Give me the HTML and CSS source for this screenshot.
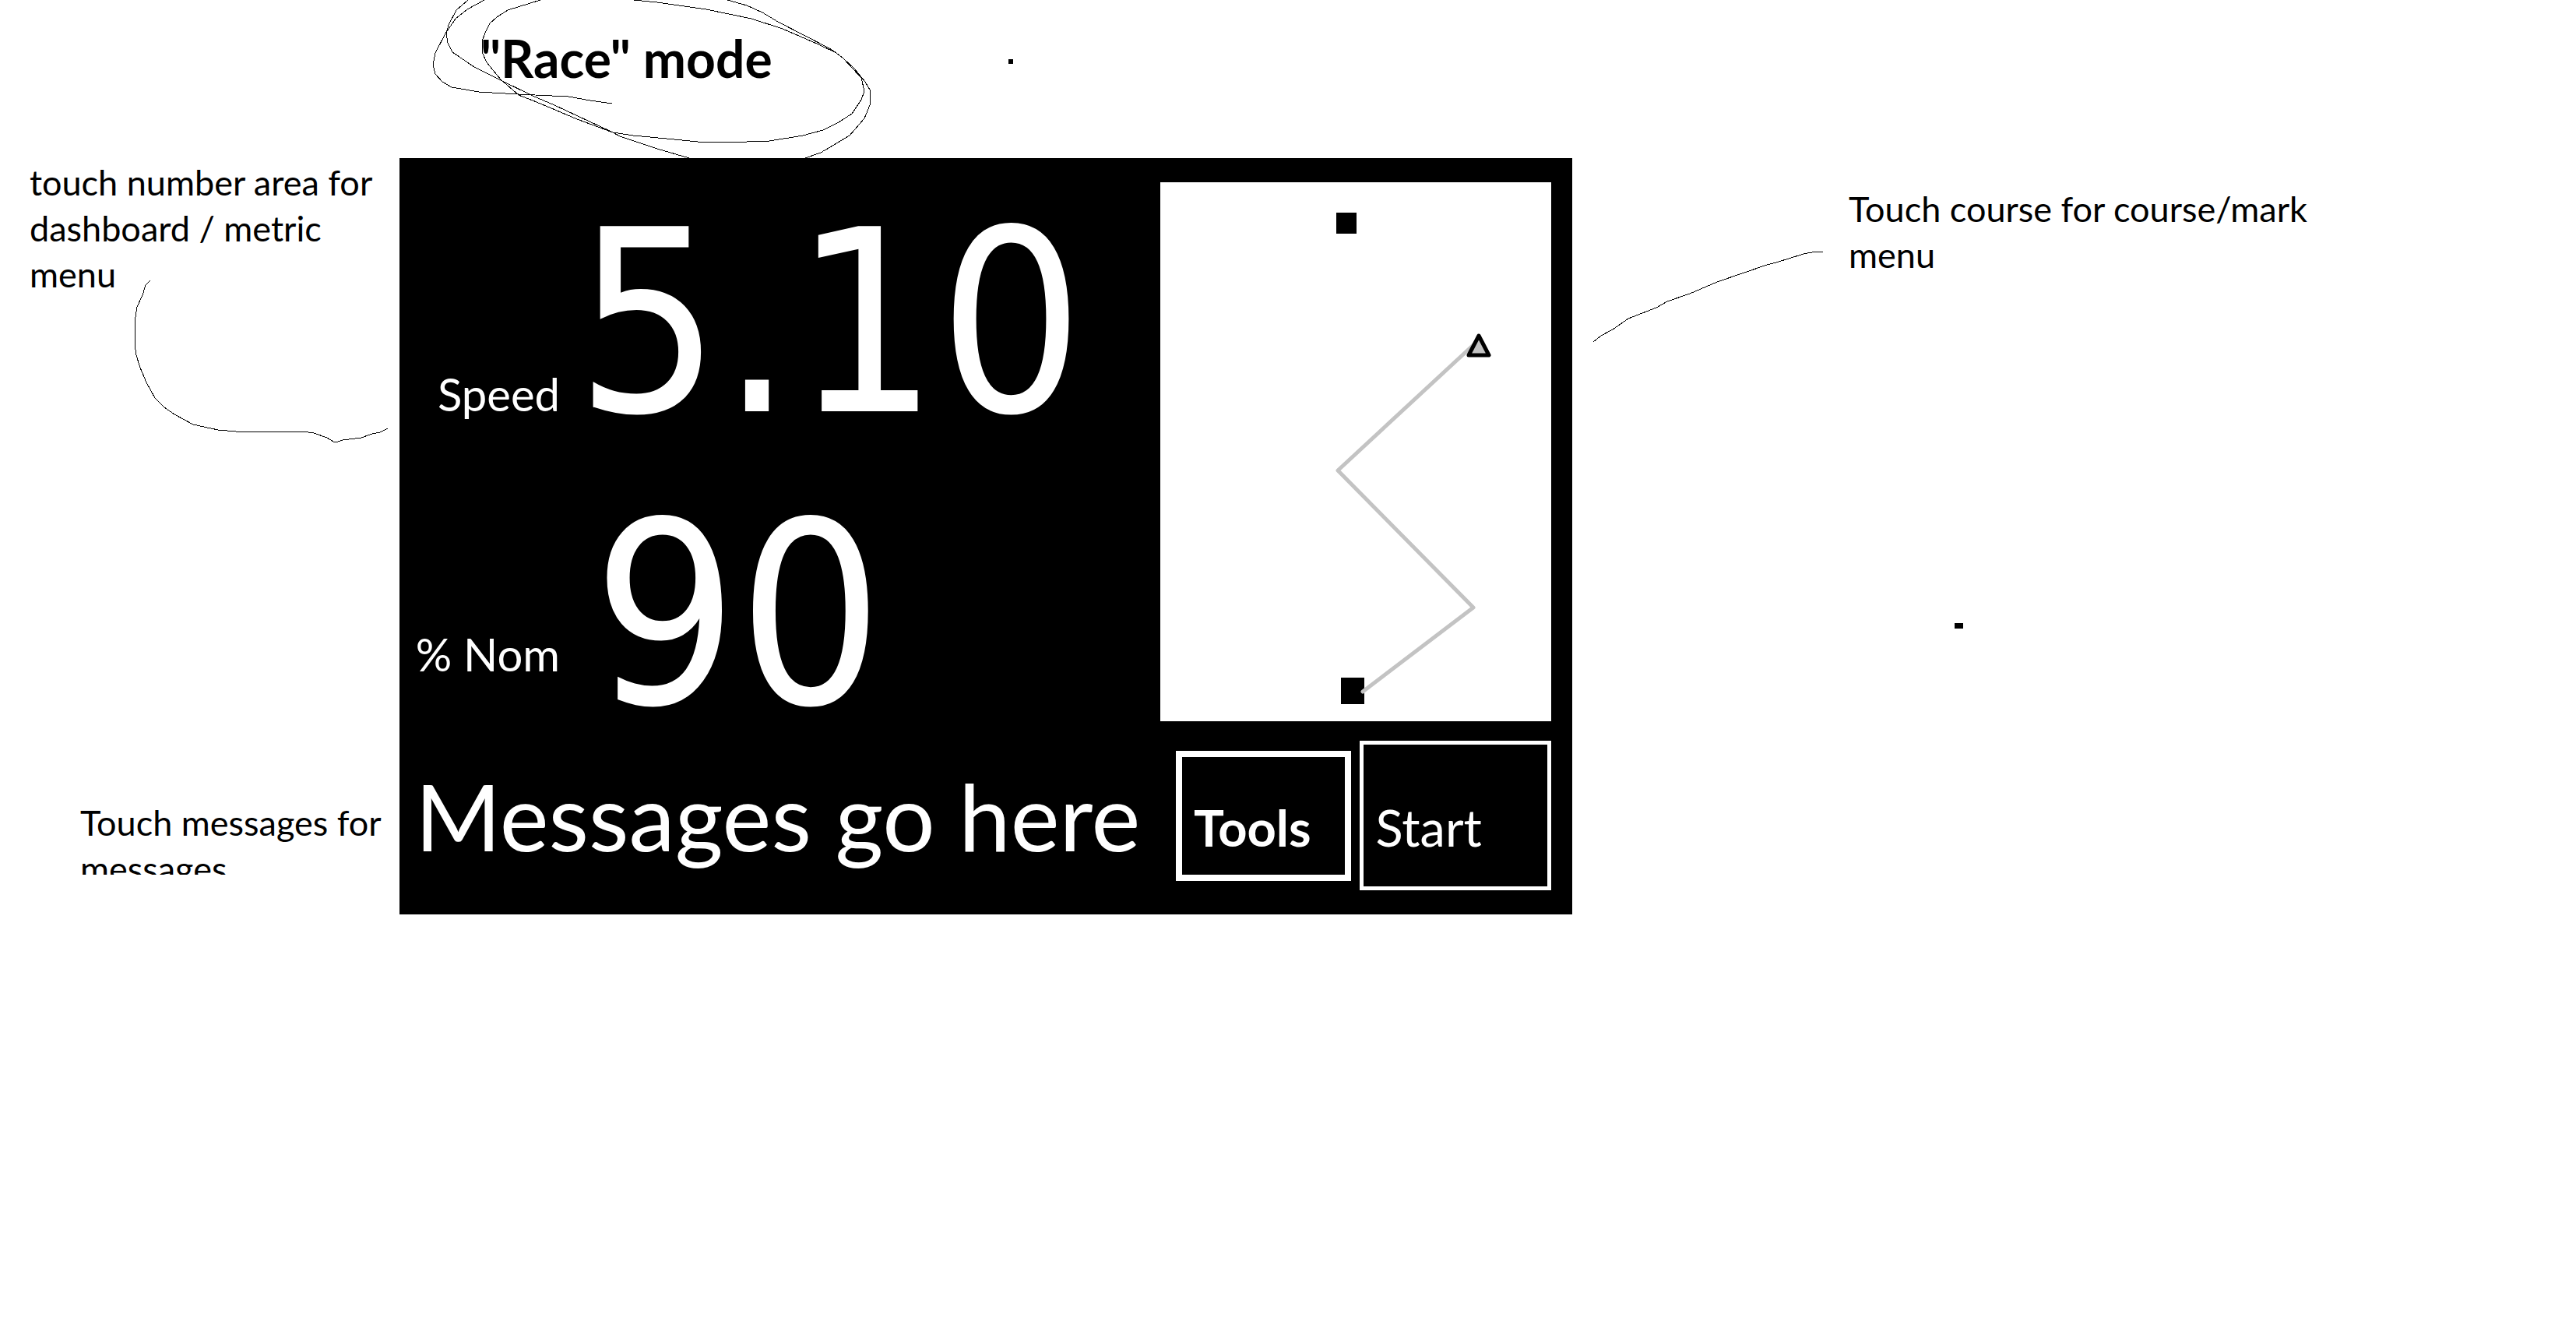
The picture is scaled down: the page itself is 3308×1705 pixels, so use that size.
FILE: index.html
```html
<!DOCTYPE html>
<html lang="en">
<head>
<meta charset="utf-8">
<title>"Race" mode</title>
<link rel="stylesheet" href="styles.css">
</head>
<body>
<main class="sheet">
  <header class="heading">
    <svg class="scribble" width="570" height="204" viewBox="552 0 570 204" aria-hidden="true">
      <polyline points="786,133 758,129 730,124 666,121 615,118 580,112 568,105 559,95 556,83 559,68 572,43 585,24 600,12 622,0"/>
      <polyline points="601,0 586,13 576,32 573,43 575,55 581,67 609,86 643,103 684,123 712,135 787,170 813,174 856,178 896,182 930,183 988,181 1031,174 1057,167 1077,157 1094,146 1106,128 1110,117 1106,100 1083,75 1074,68 1065,62 999,28 979,16 959,7 934,0"/>
      <polyline points="694,0 652,13 638,22 629,30 623,42 619,53 619,67 625,80 633,90 643,102 666,122 684,129 701,136 741,153 787,170 796,175 844,191 885,203"/>
      <polyline points="1034,203 1054,196 1091,174 1110,152 1117,135 1118,117 1111,105 1097,88 1083,75 1074,68 1051,57 1005,37 965,24 907,12 844,3 814,0"/>
    </svg>
    <h1 class="title">"Race" mode</h1>
    <span class="speck"></span>
  </header>

  <aside class="notes notes-left">
    <p class="note">touch number area for dashboard / metric menu</p>
    <svg class="stroke stroke-left" width="328" height="210" viewBox="172 361 328 210" aria-hidden="true">
      <polyline points="193,361 187,367 183,380 176,395 174,408 173,423 173,443 175,457 180,473 188,492 199,512 211,524 224,533 248,546 280,553 303,555 388,555 403,557 420,563 428,568 434,568 440,566 464,563 478,558 488,556 498,551"/>
    </svg>
    <p class="note note-messages">Touch messages for messages</p>
  </aside>

  <section class="panel" aria-label="Race display">
    <div class="readings">
      <div class="reading">
        <span class="label">Speed</span>
        <span class="value">5.10</span>
      </div>
      <div class="reading reading-nominal">
        <span class="label">% Nom</span>
        <span class="value">90</span>
      </div>
    </div>
    <svg class="course" viewBox="0 0 502 692" role="img" aria-label="Course">
      <rect class="mark" x="226" y="39" width="26" height="27"/>
      <rect class="mark" x="232" y="636" width="30" height="34"/>
      <polyline class="track" points="403,208 228,370 402,546 260,654"/>
      <path class="boat" d="M409 197 L422 222 H396 Z"/>
    </svg>
    <p class="message">Messages go here</p>
    <div class="actions">
      <button class="action action-tools" type="button">Tools</button>
      <button class="action action-start" type="button">Start</button>
    </div>
  </section>

  <aside class="notes notes-right">
    <div class="callout">
      <svg class="stroke stroke-right" width="296" height="118" viewBox="2046 322 296 118" aria-hidden="true">
        <polyline points="2046,439 2056,431 2071,423 2091,409 2109,402 2127,395 2141,387 2170,377 2205,362 2237,351 2269,340 2281,337 2297,332 2316,326 2332,323 2341,323"/>
      </svg>
      <p class="note note-course">Touch course for course/mark menu</p>
    </div>
    <span class="speck speck-wide"></span>
  </aside>
</main>
</body>
</html>
```
FILE: styles.css
```css
* {
  box-sizing: border-box;
}

body {
  margin: 0;
  background: #fff;
  color: #000;
  font-family: Lato, "Open Sans", sans-serif;
}

h1,
p {
  margin: 0;
}

.sheet {
  display: grid;
  grid-template-columns: 513fr 1506fr 1289fr;
  grid-template-rows: 203px auto;
}

/* Heading */
.heading {
  grid-column: 2;
  position: relative;
  display: flex;
  align-items: flex-start;
  padding: 40px 0 0 104px;
}

.title {
  width: 678px;
  font-size: 66px;
  line-height: 70px;
  font-weight: 700;
}

.scribble {
  position: absolute;
  left: 39px;
  top: 0;
}

.scribble polyline,
.stroke polyline {
  fill: none;
  stroke: #000;
  stroke-width: 1;
  shape-rendering: crispEdges;
}

.speck {
  width: 6px;
  height: 6px;
  margin-top: 36px;
  background: #000;
}

/* Notes around the display */
.notes {
  display: flex;
  flex-direction: column;
  align-items: flex-start;
}

.notes-left {
  grid-column: 1;
  padding: 2px 0 0 38px;
}

.note {
  font-size: 45px;
  line-height: 59px;
}

.stroke {
  display: block;
  flex: none;
}

.stroke-left {
  margin: -22px 0 0 134px;
}

.note-messages {
  height: 96px;
  margin: auto 0 51px 65px;
  overflow: hidden;
}

.callout {
  display: flex;
  align-items: flex-start;
  padding-left: 27px;
}

.stroke-right {
  margin-top: 119px;
}

.note-course {
  max-width: 640px;
  padding: 36px 0 0 32px;
}

.speck-wide {
  width: 11px;
  height: 7px;
  margin: 360px 0 0 491px;
}

/* Display */
.panel {
  display: grid;
  grid-template-columns: 977fr 502fr;
  row-gap: 10px;
  padding: 31px 27px 31px 0;
  background: #000;
  color: #fff;
}

.readings {
  display: flex;
  flex-direction: column;
  gap: 13px;
  margin-bottom: -30px;
}

.reading {
  display: grid;
  grid-template-columns: 206px auto;
  column-gap: 20px;
  align-items: baseline;
}

.label {
  font-size: 58px;
  line-height: 60px;
  text-align: right;
  white-space: nowrap;
}

.value {
  font-family: "DejaVu Sans Condensed", "DejaVu Sans", sans-serif;
  font-size: 326px;
  line-height: 362px;
}

.reading-nominal {
  column-gap: 42px;
}

.reading-nominal .label {
  align-self: end;
  margin-bottom: 101px;
}

.course {
  display: block;
  width: 100%;
  background: #fff;
}

.track {
  fill: none;
  stroke: #c3c3c3;
  stroke-width: 5;
  stroke-linecap: round;
  stroke-linejoin: round;
}

.boat {
  fill: #c3c3c3;
  stroke: #000;
  stroke-width: 5;
  stroke-linejoin: round;
}

.message {
  align-self: center;
  padding-left: 20px;
  font-size: 119px;
  line-height: 136px;
  white-space: nowrap;
}

.actions {
  display: grid;
  grid-template-columns: 225fr 245fr;
  align-items: center;
  gap: 11px;
  padding-left: 20px;
}

.action {
  padding: 30px 0 0 15px;
  border: 5px solid #fff;
  background: #000;
  color: #fff;
  font-family: inherit;
  font-size: 65px;
  line-height: 70px;
  text-align: left;
}

.action-tools {
  height: 167px;
  border-width: 8px;
  font-weight: 700;
}

.action-start {
  height: 192px;
}
```
